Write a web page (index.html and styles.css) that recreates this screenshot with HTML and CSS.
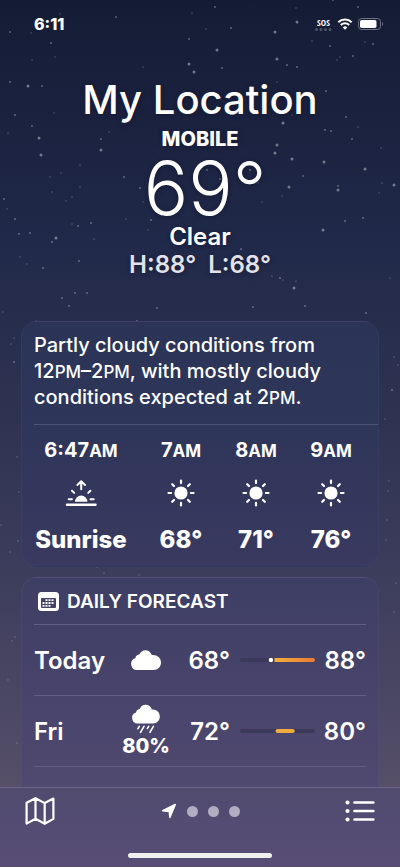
FILE: index.html
```html
<!DOCTYPE html>
<html lang="en">
<head>
<meta charset="utf-8">
<meta name="viewport" content="width=device-width, initial-scale=1">
<title>Weather</title>
<link rel="stylesheet" href="styles.css">
</head>
<body>
<div class="app">
  <svg class="stars" viewBox="0 0 400 867" preserveAspectRatio="xMidYMin slice" aria-hidden="true">
    <path class="star star-bright" d="M28 86h0M39 138h0M41 155h0M56 238h0M189 64h0M194 72h0M277 59h0M275 32h0M277 145h0M275 153h0M283 123h0M289 187h0M324 162h0M292 159h0M394 185h0M323 230h0M294 288h0M338 190h0M365 169h0M101 150h0M297 22h0M217 50h0"/>
    <path class="star star-mid" d="M10 32h0M51 43h0M116 17h0M189 39h0M231 28h0M215 7h0M222 68h0M287 65h0M297 67h0M330 46h0M353 56h0M373 44h0M358 7h0M333 0h0M346 117h0M352 139h0M331 131h0M325 130h0M101 139h0M124 177h0M10 82h0M42 86h0M15 115h0M32 126h0M4 199h0M15 219h0M19 234h0M30 233h0M52 242h0M43 268h0M79 261h0M78 226h0M91 223h0M75 293h0M87 293h0M62 298h0M140 188h0M151 220h0M241 249h0M338 186h0M345 221h0M363 218h0M280 278h0M305 306h0M326 91h0M303 176h0M69 306h0M157 308h0M253 307h0M366 313h0M137 321h0M14 362h0M392 390h0M207 170h0M220 179h0M250 170h0"/>
    <path class="star star-dim" d="M60 14h0M31 33h0M32 60h0M55 57h0M143 67h0M206 29h0M192 13h0M296 8h0M312 41h0M340 57h0M365 42h0M337 60h0M54 113h0M8 133h0M109 132h0M80 165h0M61 173h0M50 177h0M52 192h0M66 201h0M72 197h0M80 187h0M7 209h0M20 257h0M27 264h0M94 239h0M72 224h0M148 230h0M126 219h0M143 202h0M258 183h0M262 202h0M283 280h0M272 276h0M390 278h0M381 148h0M358 127h0M382 183h0M379 193h0M277 82h0M292 115h0M282 196h0M296 281h0M3 312h0M14 338h0M11 344h0M36 321h0M394 357h0M398 365h0M385 419h0M17 457h0M19 492h0M1 525h0M18 541h0M10 552h0M389 481h0M388 491h0M387 520h0M386 540h0M97 567h0M104 573h0M139 575h0M15 637h0M12 641h0M8 680h0M17 743h0M396 583h0M394 612h0M374 582h0"/>
  </svg>

  <div class="status">
    <time class="clock">6:11</time>
    <div class="signals">
      <span class="sos">SOS<svg class="sos-dots" viewBox="0 0 17 3" aria-hidden="true"><path d="M1.5 1.5h0M6 1.5h0M10.5 1.5h0M15 1.5h0"/></svg></span>
      <svg class="wifi" viewBox="0 0 16 12" aria-hidden="true">
        <path d="M1.300 4.300a9.500 9.500 0 0 1 13.400 0M3.800 7a6 6 0 0 1 8.400 0"/>
        <path class="wifi-base" d="M8 11.700 5.800 9.400a3.200 3.200 0 0 1 4.400 0z"/>
      </svg>
      <svg class="battery" viewBox="0 0 26 12" aria-hidden="true">
        <rect class="battery-shell" x=".5" y=".5" width="22" height="11" rx="3.200"/>
        <rect class="battery-fill" x="2" y="2" width="16.500" height="8" rx="1.800"/>
        <path class="battery-tip" d="M24 4.200c1.600.5 1.600 3.100 0 3.600z"/>
      </svg>
    </div>
  </div>

  <main class="content">
    <header class="hero">
      <h1 class="place">My Location</h1>
      <p class="network">MOBILE</p>
      <p class="temperature">69<span class="degree">°</span></p>
      <p class="condition">Clear</p>
      <p class="range">H:88°&nbsp; L:68°</p>
    </header>

    <section class="card">
      <p class="summary">Partly cloudy conditions from 12<span class="caps">PM</span>–2<span class="caps">PM</span>, with mostly cloudy conditions expected at 2<span class="caps">PM</span>.</p>
      <ul class="hours">
        <li class="hour hour-wide">
          <span class="hour-time">6:47<span class="caps">AM</span></span>
          <svg class="hour-icon" viewBox="0 0 32 32" role="img" aria-label="Sunrise">
            <path class="line" d="M2 27.700h28.500" stroke-width="2.400"/>
            <path class="fill" d="M10 24.800a6.200 6.200 0 1 1 12.400 0z"/>
            <path class="line" d="M3.700 22.300h3.200M25.500 22.300h3.200M7 13.700l2.200 2.200M25.400 13.700l-2.200 2.200M16.200 12.200V4.800M12.400 8l3.800-3.800L20 8" stroke-width="2"/>
          </svg>
          <span class="hour-temp">Sunrise</span>
        </li>
        <li class="hour">
          <span class="hour-time">7<span class="caps">AM</span></span>
          <svg class="hour-icon" viewBox="0 0 32 32" role="img" aria-label="Sunny"><circle class="fill" cx="16" cy="16" r="6.600"/><path class="line" d="M16 3.500v2.600M16 25.900v2.600M3.500 16h2.600M25.900 16h2.600M7.200 7.200L9 9M23 23l1.800 1.800M7.200 24.800L9 23M23 9l1.800-1.800" stroke-width="2.200"/></svg>
          <span class="hour-temp">68°</span>
        </li>
        <li class="hour">
          <span class="hour-time">8<span class="caps">AM</span></span>
          <svg class="hour-icon" viewBox="0 0 32 32" role="img" aria-label="Sunny"><circle class="fill" cx="16" cy="16" r="6.600"/><path class="line" d="M16 3.500v2.600M16 25.900v2.600M3.500 16h2.600M25.900 16h2.600M7.200 7.200L9 9M23 23l1.800 1.800M7.200 24.800L9 23M23 9l1.800-1.800" stroke-width="2.200"/></svg>
          <span class="hour-temp">71°</span>
        </li>
        <li class="hour">
          <span class="hour-time">9<span class="caps">AM</span></span>
          <svg class="hour-icon" viewBox="0 0 32 32" role="img" aria-label="Sunny"><circle class="fill" cx="16" cy="16" r="6.600"/><path class="line" d="M16 3.500v2.600M16 25.900v2.600M3.500 16h2.600M25.900 16h2.600M7.200 7.200L9 9M23 23l1.800 1.800M7.200 24.800L9 23M23 9l1.800-1.800" stroke-width="2.200"/></svg>
          <span class="hour-temp">76°</span>
        </li>
      </ul>
    </section>

    <section class="card card-daily">
      <h2 class="daily-title">
        <svg class="calendar" viewBox="0 0 21 19" aria-hidden="true">
          <rect class="fill" width="21" height="19" rx="3.500"/>
          <rect class="calendar-page" x="3" y="6" width="15" height="10" rx="1"/>
          <path class="calendar-days" d="M7.500 8.200h9M4.500 11h12M4.500 13.800h9"/>
        </svg>
        DAILY FORECAST
      </h2>
      <ul class="days">
        <li class="day">
          <span class="day-name">Today</span>
          <span class="day-sky">
            <svg class="cloud" viewBox="0 0 30 20" role="img" aria-label="Cloudy"><path class="fill" d="M6.300 20a6 6 0 0 1-2-11.700C4.700 5.600 6.500 4.500 8.300 4.500 9.500 1.800 11.700.2 14.200.2c3.200 0 5.700 2 6.600 4.900 5-.6 9.200 2.600 9.200 7.400 0 4.300-3 7.500-7.300 7.500z"/></svg>
          </span>
          <span class="low">68°</span>
          <svg class="span" viewBox="0 0 74 6" preserveAspectRatio="none" aria-hidden="true">
            <defs><linearGradient id="warm"><stop offset="0" stop-color="#f3ae3d"/><stop offset="1" stop-color="#ec7a35"/></linearGradient></defs>
            <rect class="track" y="1" width="74" height="4" rx="2"/>
            <path fill="url(#warm)" d="M34 1h38a2 2 0 0 1 0 4H34z"/>
            <circle class="now-ring" cx="30.500" cy="3" r="3"/>
            <circle class="fill" cx="30.500" cy="3" r="2.200"/>
          </svg>
          <span class="high">88°</span>
        </li>
        <li class="day">
          <span class="day-name">Fri</span>
          <span class="day-sky">
            <svg class="rain" viewBox="0 0 30 30" role="img" aria-label="Rain"><path class="fill" d="M7.300 19.500a5.600 5.600 0 0 1-2.300-10.900C5.400 6 7 5 8.800 4.900 9.800 2.300 12 .8 14.500.8c3.200 0 5.500 2 6.300 4.800 4.700-.5 8 2.600 8 6.900 0 4-2.800 7-6.800 7z"/><path class="line" d="M8.300 22.300l-1.400 2.400M13 22.300l-3.500 6M17.700 22.300l-1.400 2.400M22.400 22.300l-3.500 6" stroke-width="1.600"/></svg>
            <span class="chance">80%</span>
          </span>
          <span class="low">72°</span>
          <svg class="span" viewBox="0 0 74 6" preserveAspectRatio="none" aria-hidden="true">
            <rect class="track" y="1" width="74" height="4" rx="2"/>
            <rect x="35" y="1" width="19" height="4" rx="2" fill="#efad40"/>
          </svg>
          <span class="high">80°</span>
        </li>
      </ul>
    </section>
  </main>

  <nav class="toolbar">
    <div class="tools">
      <button class="tool" type="button" aria-label="Map">
        <svg class="tool-icon" viewBox="0 0 30 30" aria-hidden="true"><path class="line" d="M1.600 6.700 10.500 2.200l9.200 4.900 8.700-4.500v20.300l-8.700 4.900-9.200-5-8.900 4.800zM10.500 2.200v20.600M19.700 7.100v20.700" stroke-width="2.200"/></svg>
      </button>
      <div class="pages">
        <svg class="arrow" viewBox="0 0 16 16" aria-hidden="true"><path class="fill" stroke="#fff" stroke-width="1.600" stroke-linejoin="round" d="M1.700 7.700 14.300 1.500 8.900 14.300 8.300 8.400z"/></svg>
        <span class="dot"></span>
        <span class="dot"></span>
        <span class="dot"></span>
      </div>
      <button class="tool" type="button" aria-label="Locations">
        <svg class="tool-icon" viewBox="0 0 30 30" aria-hidden="true"><path class="line" d="M9.500 6.500h18.800M9.500 15h18.800M9.500 23.500h18.800" stroke-width="2.700"/><path class="line" d="M2.500 6.500h0M2.500 15h0M2.500 23.500h0" stroke-width="4.200"/></svg>
      </button>
    </div>
    <div class="home"></div>
  </nav>
</div>
</body>
</html>
```
FILE: styles.css
```css
* {
  box-sizing: border-box;
}

body {
  margin: 0;
  color: #fff;
  font-family: Inter, "Liberation Sans", sans-serif;
  font-size: 20px;
  background: #564d74;
}

h1, h2, p, ul {
  margin: 0;
  padding: 0;
}

ul {
  list-style: none;
}

.app {
  position: relative;
  display: flex;
  flex-direction: column;
  height: 100vh;
  overflow: hidden;
  background: linear-gradient(#141c35 0%, #1a213e 12%, #21294a 28%, #292f4e 40%, #333654 54%, #3e3e5d 68%, #4a4763 80%, #575069 92%);
}

.stars {
  position: absolute;
  inset: 0;
  width: 100%;
  height: 100%;
}

.star {
  fill: none;
  stroke: #c9cbd6;
  stroke-linecap: round;
  stroke-width: 2;
}

.star-bright {
  stroke-width: 3;
  opacity: .5;
}

.star-mid {
  opacity: .4;
}

.star-dim {
  opacity: .18;
}

.fill {
  fill: #fff;
}

.line {
  fill: none;
  stroke: #fff;
  stroke-linecap: round;
  stroke-linejoin: round;
}

.status {
  position: relative;
  display: flex;
  align-items: center;
  justify-content: space-between;
  height: 48px;
  padding: 0 16px 0 34px;
}

.clock {
  font-size: 16px;
  font-weight: 800;
}

.signals {
  display: flex;
  align-items: center;
  gap: 5px;
}

.sos {
  display: flex;
  flex-direction: column;
  align-items: center;
  gap: 1px;
  font: 700 9px/9px "Liberation Sans Narrow", "Open Sans Condensed", "Roboto Condensed", Roboto, sans-serif;
}

.sos-dots {
  width: 17px;
  height: 3px;
  fill: none;
  stroke: #4d5369;
  stroke-linecap: round;
  stroke-width: 3;
}

.wifi {
  width: 16px;
  height: 12px;
  fill: none;
  stroke: #fff;
  stroke-width: 2;
}

.wifi-base {
  fill: #fff;
  stroke: none;
}

.battery {
  width: 26px;
  height: 12px;
}

.battery-shell {
  fill: none;
  stroke: #6d7285;
}

.battery-fill {
  fill: #fff;
}

.battery-tip {
  fill: #6d7285;
}

.content {
  position: relative;
  display: flex;
  flex: 1;
  flex-direction: column;
  gap: 10px;
  min-height: 0;
  padding: 0 21px;
  overflow: hidden;
}

.hero {
  padding: 27px 0 32px;
  text-align: center;
  text-shadow: 0 1px 5px rgba(10, 14, 34, .45);
}

.place {
  font-size: 40px;
  font-weight: 500;
  line-height: 50px;
}

.network {
  font-weight: 800;
  line-height: 28px;
}

.temperature {
  font-size: 74px;
  font-weight: 300;
  line-height: 70px;
}

.degree {
  margin-right: -10px;
}

.condition {
  font-size: 24px;
  font-weight: 600;
  line-height: 28px;
}

.range {
  color: #e2e2e8;
  font-size: 24px;
  font-weight: 600;
  line-height: 28px;
}

.caps {
  font-size: 17px;
  line-height: 1;
}

.card {
  padding: 10px 0 0 12px;
  border: 1px solid rgba(160, 165, 220, .06);
  border-radius: 16px;
  background: linear-gradient(#2b3456, #2e3659 45%, #3a3960);
}

.summary {
  padding: 0 40px 14px 0;
  border-bottom: 1px solid #4b5375;
  font-weight: 500;
  line-height: 26px;
}

.hours {
  display: flex;
  gap: 31px;
  padding: 12px 0 10px;
}

.hour {
  display: flex;
  flex: none;
  flex-direction: column;
  align-items: center;
  width: 44px;
}

.hour-wide {
  width: 94px;
}

.hour-time {
  font-weight: 700;
  line-height: 26px;
}

.hour-icon {
  width: 32px;
  height: 32px;
  margin: 14px 0 15px;
}

.hour-temp {
  font-size: 24px;
  font-weight: 800;
  line-height: 32px;
}

.card-daily {
  flex: 1;
  padding: 0 12px;
  border-bottom: 0;
  border-radius: 16px 16px 0 0;
  background: linear-gradient(#3e3e64, #47436a 50%, #504970);
}

.daily-title {
  display: flex;
  align-items: center;
  gap: 8px;
  height: 47px;
  padding-left: 4px;
  border-bottom: 1px solid #605e80;
  font-size: 19px;
  font-weight: 600;
}

.calendar {
  width: 21px;
  height: 19px;
}

.calendar-page {
  fill: #45436a;
}

.calendar-days {
  fill: none;
  stroke: #fff;
  stroke-dasharray: 2 1;
  stroke-width: 1.8;
}

.day {
  display: grid;
  grid-template-columns: 83px 58px 55px 1fr 51px;
  align-items: center;
  height: 71px;
  border-bottom: 1px solid #605d82;
  font-size: 24px;
  font-weight: 600;
}

.day-sky {
  display: flex;
  flex-direction: column;
  align-items: center;
}

.cloud {
  width: 30px;
  height: 20px;
}

.rain {
  width: 30px;
  height: 30px;
}

.chance {
  font-size: 20px;
  font-weight: 800;
  line-height: 24px;
}

.low,
.high {
  text-align: right;
}

.span {
  width: calc(100% - 10px);
  height: 6px;
  margin-left: 10px;
}

.track,
.now-ring {
  fill: #3b3959;
}

.toolbar {
  position: relative;
  display: flex;
  flex: none;
  flex-direction: column;
  align-items: center;
  justify-content: space-between;
  height: 80px;
  padding-bottom: 9px;
  border-top: 1px solid #6a6588;
  background: linear-gradient(#514b70, #574d75);
}

.tools {
  display: flex;
  align-items: center;
  justify-content: space-between;
  width: 100%;
  height: 46px;
  padding: 0 25px;
}

.tool {
  display: flex;
  padding: 0;
  border: 0;
  background: none;
  cursor: pointer;
}

.tool-icon {
  width: 30px;
  height: 30px;
}

.pages {
  display: flex;
  align-items: center;
  gap: 10px;
}

.arrow {
  width: 16px;
  height: 16px;
}

.dot {
  width: 11px;
  height: 11px;
  border-radius: 50%;
  background: #b2adc1;
}

.home {
  width: 36%;
  height: 5px;
  border-radius: 3px;
  background: #efeff0;
}
```
